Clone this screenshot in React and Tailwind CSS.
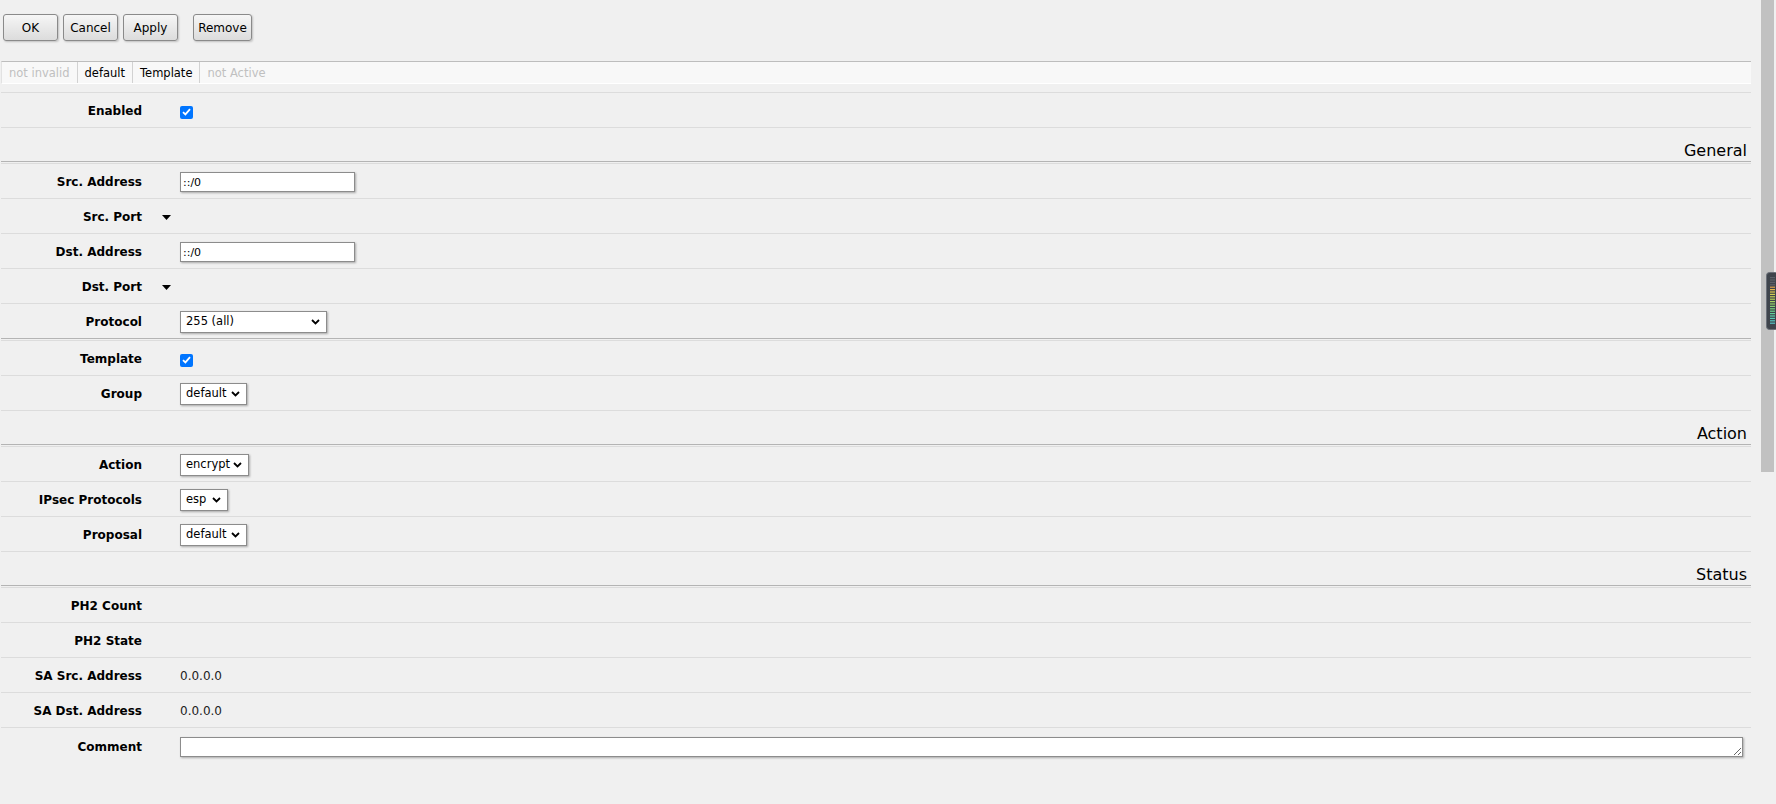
import React from "react";

function Chevron() {
  return (
    <svg width="9" height="6" viewBox="0 0 9 6" className="shrink-0">
      <polyline points="1,1 4.5,4.5 8,1" fill="none" stroke="#000" strokeWidth="1.8" />
    </svg>
  );
}

function Select({ value, width }) {
  return (
    <div className={`flex items-center justify-between h-[22px] ${width} bg-white border border-[#8c8c8c] pl-[5px] pr-[6px] text-[11.5px] text-black shadow-[1px_1px_2px_rgba(0,0,0,0.3)]`}>
      <span>{value}</span>
      <Chevron />
    </div>
  );
}

function TextInput({ value }) {
  return (
    <input
      value={value}
      readOnly
      className="w-[175px] h-[20px] bg-white border border-[#8c8c8c] px-[2px] text-[11px] text-black outline-none shadow-[1px_1px_2px_rgba(0,0,0,0.3)]"
    />
  );
}

function Check() {
  return (
    <div className="w-[13px] h-[13px] rounded-[2px] bg-[#0075ff] flex items-center justify-center mt-[2px]">
      <svg width="9" height="8" viewBox="0 0 9 8">
        <polyline points="1,4.2 3.4,6.4 8,1.2" fill="none" stroke="#fff" strokeWidth="1.8" />
      </svg>
    </div>
  );
}

function Toggle() {
  return (
    <svg width="9" height="5" viewBox="0 0 9 5" className="ml-[20px]">
      <polygon points="0,0 9,0 4.5,5" fill="#000" />
    </svg>
  );
}

function Row({ label, children, border = true }) {
  return (
    <div className={`flex items-center h-[35px] pt-[2px] ${border ? "border-b border-[#dcdcdc]" : ""}`}>
      <div className="w-[141px] shrink-0 text-right font-bold text-black">{label}</div>
      {children}
    </div>
  );
}

function Ctl({ children }) {
  return <div className="ml-[38px] flex items-center">{children}</div>;
}

function Separator() {
  return <div className="relative -mt-px h-[3px] border-t border-[#b4b4b4] border-b border-b-[#dcdcdc]" />;
}

function Header({ title }) {
  return (
    <>
      <div className="flex items-end justify-end h-[34px] border-b border-[#dcdcdc] pr-[4px] text-[16px] leading-[20px] text-black">
        {title}
      </div>
      <Separator />
    </>
  );
}

function Btn({ children, width }) {
  return (
    <button className={`h-[27px] ${width} rounded-[3px] border border-[#8a8a8a] bg-gradient-to-b from-[#f6f6f6] to-[#dcdcdc] text-[12px] text-black shadow-[1px_1px_2px_rgba(0,0,0,0.2)]`}>
      {children}
    </button>
  );
}

function Meter() {
  const ticks = [
    "#5b6068", "#5b6068", "#5b6068", "#5b6068",
    "#e0a24a", "#e4b64c", "#dcc84e", "#d2d052", "#c6d256", "#b6d25c",
    "#a6d462", "#96d46a", "#86d474", "#78d480", "#6cd48e", "#62d29c",
    "#5ccfaa", "#58ccb6", "#56c8c0", "#56c4c6",
  ];
  return (
    <svg width="10" height="58" viewBox="0 0 10 58" className="absolute left-[1766px] top-[272px]">
      <rect x="0.5" y="0.5" width="12" height="57" rx="3" fill="#3f444c" stroke="#6b7079" />
      {ticks.map((c, i) => (
        <rect key={i} x="4" y={5 + i * 2.4} width="5" height="1.2" fill={c} />
      ))}
    </svg>
  );
}

export default function App() {
  return (
    <div className="relative min-h-screen bg-[#f0f0f0] font-['DejaVu_Sans',sans-serif] text-[12px] text-black overflow-hidden">
      <div className="w-[1751px] pl-px">
        <div className="flex pt-[14px] pl-[2px] gap-[5px]">
          <Btn width="w-[55px]">OK</Btn>
          <Btn width="w-[55px]">Cancel</Btn>
          <Btn width="w-[55px]">Apply</Btn>
          <div className="ml-[10px]">
            <Btn width="w-[59px]">Remove</Btn>
          </div>
        </div>

        <div className="mt-[20px] flex h-[23px] border-t border-[#bdbdbd] border-l border-l-[#e2e2e2] border-b border-b-[#ffffff] bg-[#f8f8f8] text-[11.5px]">
          <div className="flex items-center pt-[2px] px-[7px] border-r border-[#d2d2d2] text-[#c0c0c0]">not invalid</div>
          <div className="flex items-center pt-[2px] px-[7px] border-r border-[#d2d2d2]">default</div>
          <div className="flex items-center pt-[2px] px-[7px] border-r border-[#d2d2d2]">Template</div>
          <div className="flex items-center pt-[2px] px-[7px] text-[#c0c0c0]">not Active</div>
        </div>

        <div className="mt-[8px] border-t border-[#dcdcdc]">
          <Row label="Enabled">
            <Ctl><Check /></Ctl>
          </Row>

          <Header title="General" />
          <Row label="Src. Address">
            <Ctl><TextInput value="::/0" /></Ctl>
          </Row>
          <Row label="Src. Port">
            <Toggle />
          </Row>
          <Row label="Dst. Address">
            <Ctl><TextInput value="::/0" /></Ctl>
          </Row>
          <Row label="Dst. Port">
            <Toggle />
          </Row>
          <Row label="Protocol">
            <Ctl><Select value="255 (all)" width="w-[147px]" /></Ctl>
          </Row>
          <Separator />
          <Row label="Template">
            <Ctl><Check /></Ctl>
          </Row>
          <Row label="Group">
            <Ctl><Select value="default" width="w-[67px]" /></Ctl>
          </Row>

          <Header title="Action" />
          <Row label="Action">
            <Ctl><Select value="encrypt" width="w-[69px]" /></Ctl>
          </Row>
          <Row label="IPsec Protocols">
            <Ctl><Select value="esp" width="w-[48px]" /></Ctl>
          </Row>
          <Row label="Proposal">
            <Ctl><Select value="default" width="w-[67px]" /></Ctl>
          </Row>

          <Header title="Status" />
          <Row label="PH2 Count" />
          <Row label="PH2 State" />
          <Row label="SA Src. Address">
            <Ctl><span className="text-[#222]">0.0.0.0</span></Ctl>
          </Row>
          <Row label="SA Dst. Address">
            <Ctl><span className="text-[#222]">0.0.0.0</span></Ctl>
          </Row>
          <Row label="Comment" border={false}>
            <Ctl>
              <textarea
                readOnly
                className="block w-[1563px] h-[20px] resize bg-white border border-[#8c8c8c] outline-none shadow-[1px_1px_2px_rgba(0,0,0,0.3)]"
              />
            </Ctl>
          </Row>
        </div>
      </div>

      <div className="absolute left-[1761px] top-0 w-[13px] h-[472px] bg-[#c1c1c1]" />
      <Meter />
    </div>
  );
}
